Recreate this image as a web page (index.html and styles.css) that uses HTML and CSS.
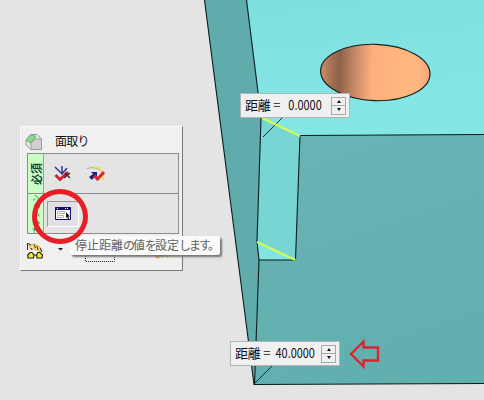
FILE: index.html
```html
<!DOCTYPE html>
<html lang="ja">
<head>
<meta charset="utf-8">
<title>面取り</title>
<link rel="stylesheet" href="styles.css">
</head>
<body>
<main class="viewport">
  <svg class="model" width="484" height="400" viewBox="0 0 484 400">
    <defs>
      <linearGradient id="top" x1="0" y1="0" x2=".2" y2="1"><stop stop-color="#7edfdf"/><stop offset="1" stop-color="#85e7e5"/></linearGradient>
      <linearGradient id="front" x1="0" y1="0" x2=".3" y2="1"><stop stop-color="#69b4b5"/><stop offset="1" stop-color="#62afaf"/></linearGradient>
      <linearGradient id="hole"><stop stop-color="#cf906c"/><stop offset=".08" stop-color="#ad7657"/><stop offset=".17" stop-color="#8e6046"/><stop offset=".3" stop-color="#c28565"/><stop offset=".47" stop-color="#ffaf7e"/><stop offset=".7" stop-color="#ffb67e"/><stop offset=".88" stop-color="#ffb883"/><stop offset="1" stop-color="#f9a477"/></linearGradient>
    </defs>
    <path fill="#60abab" d="M204.500 0H247L258.500 96L261 118L257 242L259 260L254 384Z"/>
    <path fill="url(#top)" d="M246.500 0H484V134L300 136L261 118L258.500 96Z"/>
    <path fill="url(#front)" d="M300 135.500L484 134.500V383.500L254 384.500L259 260L295 260Z"/>
    <path fill="#77d5d4" d="M261 118L300 136L295 260L257 242Z"/>
    <path fill="#82e4e2" d="M257 242L295 260H259Z"/>
    <g fill="none" stroke="#071c1c" stroke-width="1.100">
      <path d="M204.500 0L254 384.500L484 383.500M246.500 0L258.500 96L261 118L257 242L259 260L254.500 384M484 134.500L300 135.500L295.500 260H259"/>
      <path stroke-width=".9" d="M282 118L263 137M273 365L254 384"/>
    </g>
    <path stroke="#d5ff4f" stroke-width="2" fill="none" d="M262 118L300 136M257 242L295.500 260"/>
    <ellipse cx="375.300" cy="72.500" rx="54.700" ry="28.200" fill="url(#hole)" stroke="#15201c" stroke-width="1.200" transform="rotate(2 375.300 72.500)"/>
    <path fill="none" stroke="#da252c" stroke-width="2.300" d="M351 354L363.500 341.500V347.500H378V360.500H363.500V366.500Z"/>
  </svg>

  <section class="panel">
    <header class="title">
      <svg width="18" height="18" viewBox="0 0 18 18"><path fill="#e6e6e6" stroke="#8b8b8b" stroke-width=".9" d="M1 7L6 1.500H12L16.500 6V16.500H6L1 12Z"/><path fill="#d0d0d0" stroke="#999" stroke-width=".9" d="M6 10L10 6H16.500V16.500H6Z"/><path fill="#85dc88" stroke="#5fa563" stroke-width=".8" d="M1 7L6 1.500L11 3.500L5.500 10Z"/></svg>
      <h1>面取り</h1>
    </header>
    <div class="groups">
      <div class="group">
        <div class="tab"><span class="bold">必須</span></div>
        <div class="tools">
          <svg width="18" height="18" viewBox="0 0 18 18"><path stroke="#34349a" stroke-width="1.500" fill="none" d="M1 2L8 9L13 3M8 1V9"/><path stroke="#d3212e" stroke-width="3" fill="none" d="M1.500 10L6 14.500L14 7"/><path stroke="#402024" stroke-width="1.300" fill="none" d="M11 8L16 13M10 13L16 8"/></svg>
          <svg width="18" height="18" viewBox="0 0 18 18"><path stroke="#b2a98c" fill="none" d="M0 3.500Q8 1 15 6"/><path stroke="#edda59" stroke-width="2" fill="none" d="M7 2Q13 2 16 8V15"/><path fill="#20207b" d="M4 7H10V13L8 11L5 15L2 12L6 9Z"/><path stroke="#d72630" stroke-width="3" fill="none" d="M7 10.500L10.500 14L17 7"/></svg>
        </div>
      </div>
      <div class="group">
        <div class="tab faint"><span>オプション</span></div>
        <div class="tools">
          <button class="pressed"><svg width="16" height="13" viewBox="0 0 16 13"><path fill="#fff" stroke="#111170" d="M.5 .5H15.500V12.500H.5Z"/><path fill="#111170" d="M0 0H16V3H0Z"/><path fill="#fff" d="M2 1h1v1H2zM10 1h1v1h-1zM12 1h1v1h-1z"/><path fill="#fff" stroke="#aaa" stroke-width=".9" d="M2.500 4.500h7v2h-7zM2.500 8.500h6v2h-6z"/><path fill="#111" d="M11 5V11L12 10L13 12H14L13.300 9.500H15Z"/></svg></button>
        </div>
      </div>
    </div>
    <footer class="actions">
      <svg width="151" height="24" viewBox="0 0 151 24">
        <path fill="#f7da82" stroke="#d5aa43" stroke-width=".8" d="M2 3L8 2L13 5L15 9L12 10L8 7L3 7Z"/><path stroke="#312d20" fill="none" d="M.5 1V8M1 1.500L4 3M4 6L5 8M7 2.500L8.500 6M10 4L11 8M13 6L15 10"/>
        <path fill="#f5e730" stroke="#292713" stroke-width="1.200" d="M3 10.500H5L7 13L6.500 16H1L.7 13ZM11 10.500H13L15.500 13L15 16H10L9.500 13ZM7 13H9.500"/>
        <path fill="#111" d="M31 6H36L33.500 8.500Z"/><path stroke="#222" stroke-dasharray="1 1" fill="none" d="M58.500 6V19.500H87.500V6"/><path fill="#333" d="M109 12H112L109.500 15Z"/><path stroke="#d9a32b" stroke-width="2" fill="none" d="M128 14L131 15.500L133 12L136 15M138 13L141 15"/>
      </svg>
    </footer>
  </section>

  <div class="tooltip">停止距離<i>の</i>値<i>を</i>設定<i>します。</i></div>
  <div class="callout"></div>

  <div class="distance start"><span class="label">距離 =</span><span class="value"><b>0.0000</b></span><span class="spin"><i class="up"></i><i class="down"></i></span></div>
  <div class="distance end"><span class="label">距離 =</span><span class="value"><b>40.0000</b></span><span class="spin"><i class="up"></i><i class="down"></i></span></div>
</main>
</body>
</html>
```
FILE: styles.css
```css
* { box-sizing: border-box; }
body { margin: 0; }
svg { display: block; flex: none; }
i { font-style: normal; }
.viewport {
  position: relative;
  width: 484px;
  height: 400px;
  overflow: hidden;
  background: #e4e4e4;
  font: 12px/16px "Noto Sans CJK JP", sans-serif;
  color: #111;
}
.model { position: absolute; inset: 0; }
.panel {
  position: absolute;
  left: 20px;
  top: 126px;
  width: 163px;
  height: 145px;
  padding: 0 3px 0 6px;
  background: #f0f0f0;
  border: 1px solid #fafafa;
  border-right-color: #777;
  border-bottom-color: #777;
}
.title { display: flex; align-items: center; gap: 12px; height: 26px; padding-top: 3px; margin-left: -2px; }
.title h1 { margin: 0 0 1px; font-size: 12px; font-weight: 400; letter-spacing: -.8px; white-space: nowrap; }
.groups { width: 152px; border: 1px solid #8d8d8d; background: #e4e4e4; }
.group { display: flex; height: 39px; }
.group + .group { height: 40px; border-top: 1px solid #8d8d8d; }
.tab {
  width: 16px;
  flex: none;
  display: flex;
  align-items: center;
  justify-content: center;
  overflow: hidden;
  background: #c9ffc7;
  border-right: 1px solid #8fa98e;
  font-size: 11px;
}
.tab span { transform: rotate(-90deg); white-space: nowrap; flex: none; }
.bold { font-weight: 700; color: #163f38; }
.faint span { font-size: 8px; color: #39743c; }
.tools { display: flex; align-items: center; gap: 15px; padding-left: 10px; }
.pressed {
  display: flex;
  align-items: center;
  justify-content: center;
  width: 32px;
  height: 26px;
  margin-left: -7px;
  padding: 0;
  background: #e1e1e4;
  border: 1px solid #999;
  border-right-color: #fff;
  border-bottom-color: #fff;
}
.actions { padding-top: 8px; }
.tooltip {
  position: absolute;
  left: 70px;
  top: 236px;
  width: 150px;
  height: 19px;
  padding-left: 5px;
  line-height: 17px;
  white-space: nowrap;
  color: #606060;
  background: #fafafa;
  border-radius: 2px;
  box-shadow: 2px 2px 2px #777;
}
.tooltip i { letter-spacing: -2px; }
.callout {
  position: absolute;
  left: 32px;
  top: 189px;
  width: 56px;
  height: 55px;
  border: 5px solid #e71e25;
  border-radius: 50%;
}
.distance {
  position: absolute;
  display: flex;
  align-items: center;
  width: 110px;
  height: 25px;
  padding: 0 3px 0 4px;
  background: #f0f0f0;
  border: 1px solid #adb5b5;
}
.start { left: 240px; top: 93px; }
.end { left: 230px; top: 341px; }
.label { flex: none; font-size: 13px; width: 38px; margin-bottom: 2px; letter-spacing: -.2px; white-space: nowrap; }
.value { flex: 1; min-width: 0; display: flex; justify-content: flex-end; margin-bottom: 1px; padding-right: 9px; }
.end .value { padding-right: 6px; }
.value b { flex: none; font-size: 13px; font-weight: 400; transform: scaleX(.84); transform-origin: right; }
.spin { flex: none; display: flex; flex-direction: column; width: 15px; height: 18px; border: 1px solid #a8a8a8; }
.spin i { flex: 1; display: flex; align-items: center; justify-content: center; }
.spin i + i { border-top: 1px solid #a8a8a8; }
.spin i::before { content: ""; border: 2.5px solid transparent; }
.spin .up::before { border-top: 0; border-bottom: 3px solid #111; }
.spin .down::before { border-bottom: 0; border-top: 3px solid #111; }
```
